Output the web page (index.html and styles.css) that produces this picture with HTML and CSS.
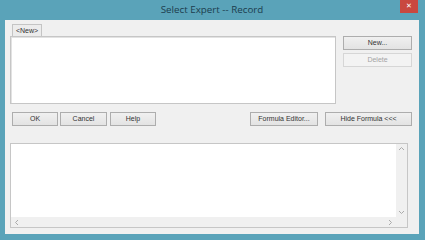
FILE: index.html
```html
<!DOCTYPE html>
<html lang="en">
<head>
  <meta charset="UTF-8">
  <title>Select Expert -- Record</title>
  <link rel="stylesheet" href="styles.css">
</head>
<body>
  <div class="window">
    <div class="titlebar">
      <span></span>
      <span class="title">Select Expert -- Record</span>
      <button class="close" type="button">&#x2715;</button>
    </div>
    <div class="client">
      <div class="top">
        <div class="tabs">
          <div class="tab">&lt;New&gt;</div>
          <div class="tab-page"></div>
        </div>
        <div class="side">
          <button class="btn" type="button">New...</button>
          <button class="btn" type="button" disabled>Delete</button>
        </div>
      </div>
      <div class="actions">
        <div class="group">
          <button class="btn w46" type="button">OK</button>
          <button class="btn w47" type="button">Cancel</button>
          <button class="btn w46" type="button">Help</button>
        </div>
        <div class="group right">
          <button class="btn w68" type="button">Formula Editor...</button>
          <button class="btn w87" type="button">Hide Formula &lt;&lt;&lt;</button>
        </div>
      </div>
      <div class="formula">
        <div class="text-area"></div>
        <div class="vscroll">
          <svg width="7" height="5" viewBox="0 0 7 5"><path d="M1 4 L3.5 1.5 L6 4" fill="none" stroke="#ababab" stroke-width="1"/></svg>
          <svg width="7" height="5" viewBox="0 0 7 5"><path d="M1 1 L3.5 3.5 L6 1" fill="none" stroke="#ababab" stroke-width="1"/></svg>
        </div>
        <div class="hscroll">
          <svg width="5" height="7" viewBox="0 0 5 7"><path d="M4 1 L1.5 3.5 L4 6" fill="none" stroke="#ababab" stroke-width="1"/></svg>
          <svg width="5" height="7" viewBox="0 0 5 7"><path d="M1 1 L3.5 3.5 L1 6" fill="none" stroke="#ababab" stroke-width="1"/></svg>
        </div>
        <div class="corner"></div>
      </div>
    </div>
  </div>
</body>
</html>
```

FILE: styles.css
```css
* {
  box-sizing: border-box;
}
body {
  margin: 0;
  font-family: "Liberation Sans", Arial, sans-serif;
}
.window {
  width: 425px;
  height: 240px;
  background-color: #5aa3b9;
  padding: 0 6px 6px 5px;
  display: flex;
  flex-direction: column;
}
.titlebar {
  height: 20px;
  display: grid;
  grid-template-columns: 1fr auto 1fr;
  align-items: center;
}
.title {
  font-family: "Open Sans", sans-serif;
  font-size: 9.8px;
  color: #1c3d4e;
  padding-bottom: 1px;
}
.close {
  justify-self: end;
  align-self: start;
  width: 18px;
  height: 13px;
  margin-right: 1px;
  border: none;
  padding: 0;
  background-color: #c9483f;
  color: #fff;
  font-family: "DejaVu Sans", sans-serif;
  font-size: 7px;
  font-weight: bold;
  line-height: 13px;
}
.client {
  flex: 1;
  background-color: #f0f0f0;
  padding: 4px 7px 6px 5px;
  display: flex;
  flex-direction: column;
}
.top {
  display: flex;
  height: 80px;
}
.tabs {
  width: 326px;
  display: flex;
  flex-direction: column;
}
.tab {
  align-self: flex-start;
  margin-left: 2px;
  width: 30px;
  height: 12px;
  border: 1px solid #c4c4c4;
  border-bottom: none;
  background-color: #ececec;
  font-size: 7px;
  line-height: 11px;
  text-align: center;
  color: #333;
}
.tab-page {
  flex: 1;
  background-color: #fff;
  border: 1px solid #c6c6c6;
  box-shadow: inset 1px 1px 0 #e2e2e2;
}
.side {
  margin-left: 7px;
  padding-top: 12px;
  display: flex;
  flex-direction: column;
  gap: 3px;
  width: 69px;
}
.btn {
  height: 14px;
  padding: 0;
  border: 1px solid #adadad;
  background: linear-gradient(#f0f0f0, #e3e3e3);
  font-family: "Liberation Sans", Arial, sans-serif;
  font-size: 7px;
  color: #333;
  line-height: 12px;
}
.btn[disabled] {
  border-color: #d6d6d6;
  background: #f3f3f3;
  color: #a4a4a4;
}
.actions {
  display: flex;
  justify-content: space-between;
  margin-top: 8px;
  padding-left: 2px;
}
.group {
  display: flex;
  gap: 2px;
}
.group.right {
  gap: 7px;
}
.w46 { width: 46px; }
.w47 { width: 47px; margin-right: 1px; }
.w68 { width: 68px; }
.w87 { width: 87px; }
.formula {
  margin-top: 17px;
  margin-right: 4px;
  flex: 1;
  display: grid;
  grid-template-columns: 1fr 11px;
  grid-template-rows: 1fr 10px;
  border: 1px solid #c6c6c6;
  background-color: #fff;
}
.vscroll {
  background-color: #f0f0f0;
  display: flex;
  flex-direction: column;
  justify-content: space-between;
  align-items: center;
  padding: 2px 0;
}
.hscroll {
  background-color: #f0f0f0;
  display: flex;
  justify-content: space-between;
  align-items: center;
  padding: 0 3px;
}
.corner {
  background-color: #f0f0f0;
}
```
